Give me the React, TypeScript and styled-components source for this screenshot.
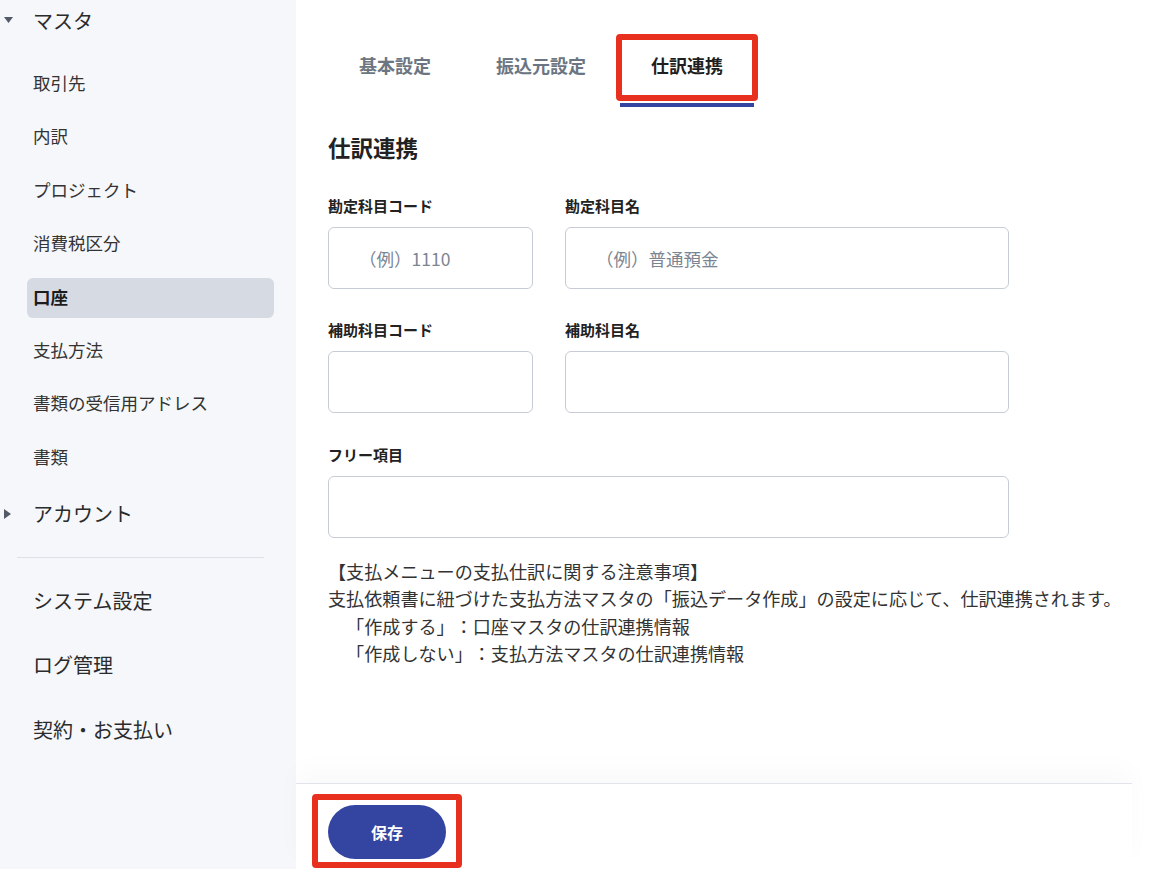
import React from 'react'
import styled, { createGlobalStyle } from 'styled-components'

const GlobalStyle = createGlobalStyle`
  html, body {
    margin: 0;
    padding: 0;
    background: #ffffff;
    font-family: "Noto Sans CJK JP", "Noto Sans", sans-serif;
    color: #333333;
    text-spacing-trim: space-all;
  }
  * {
    box-sizing: border-box;
  }
`

const Layout = styled.div({
  display: 'flex',
  height: '869px',
})

const Sidebar = styled.nav({
  width: '296px',
  flexShrink: 0,
  background: '#f5f7fa',
  display: 'flex',
  flexDirection: 'column',
})

const GroupHeader = styled.div<{ $top: number }>`
  display: flex;
  align-items: center;
  height: 40px;
  margin-top: ${(p) => p.$top}px;
  font-size: 20px;
  color: #2b2b2b;
`

const Caret = styled.span({
  width: '33px',
  paddingLeft: '4px',
  display: 'flex',
  alignItems: 'center',
})

const SubList = styled.ul({
  listStyle: 'none',
  margin: '24px 0 0',
  padding: 0,
  display: 'flex',
  flexDirection: 'column',
  gap: '13.4px',
})

const SubItem = styled.li<{ $active?: boolean }>`
  height: 40px;
  width: 247px;
  margin-left: 27px;
  padding: 0 0 3px 6px;
  display: flex;
  align-items: center;
  border-radius: 6px;
  font-size: 17.5px;
  font-weight: ${(p) => (p.$active ? 700 : 400)};
  color: ${(p) => (p.$active ? '#1c1c1c' : '#333333')};
  background: ${(p) => (p.$active ? '#d5dae3' : 'transparent')};
`

const Divider = styled.hr({
  margin: '23px 0 0 17px',
  width: '247px',
  border: 'none',
  borderTop: '1px solid #dde0e6',
})

const TopItem = styled.div<{ $top: number }>`
  height: 40px;
  margin-top: ${(p) => p.$top}px;
  padding-left: 33px;
  display: flex;
  align-items: center;
  font-size: 20px;
  color: #2b2b2b;
`

const Main = styled.main({
  width: '836px',
  display: 'flex',
  flexDirection: 'column',
})

const Content = styled.div({
  flex: 1,
  padding: '30px 0 0 32px',
})

const Tabs = styled.div({
  display: 'flex',
  gap: '3px',
})

const Tab = styled.div<{ $active?: boolean }>`
  position: relative;
  height: 77px;
  padding: 0 31px 4px;
  display: flex;
  align-items: center;
  font-size: 18px;
  font-weight: 700;
  color: ${(p) => (p.$active ? '#1f1f1f' : '#6c7682')};
  border-bottom: 4px solid ${(p) => (p.$active ? '#3345a1' : 'transparent')};
`

const Highlight = styled.span<{ $top: number; $side: number; $height: number }>`
  position: absolute;
  left: -${(p) => p.$side}px;
  right: -${(p) => p.$side}px;
  top: ${(p) => p.$top}px;
  height: ${(p) => p.$height}px;
  border: 6px solid #e8301e;
  border-radius: 4px;
  pointer-events: none;
`

const Heading = styled.h2({
  margin: '24px 0 0',
  fontSize: '22.5px',
  lineHeight: '32px',
  fontWeight: 700,
  color: '#222222',
})

const FieldRow = styled.div<{ $top: number }>`
  display: flex;
  gap: 32px;
  margin-top: ${(p) => p.$top}px;
`

const Field = styled.label({
  display: 'flex',
  flexDirection: 'column',
  gap: '10px',
})

const FieldLabel = styled.span({
  fontSize: '15px',
  lineHeight: '22px',
  fontWeight: 700,
  color: '#222222',
})

const Input = styled.input<{ $width: number }>`
  width: ${(p) => p.$width}px;
  height: 62px;
  border: 1px solid #c6ccd6;
  border-radius: 6px;
  padding: 0 30px;
  font-family: inherit;
  font-size: 17.5px;
  color: #333333;
  background: #ffffff;
  outline: none;
  &::placeholder {
    color: #7b8592;
  }
`

const Notes = styled.div({
  marginTop: '20px',
  fontSize: '18.1px',
  lineHeight: '27.4px',
  color: '#333333',
  whiteSpace: 'pre',
})

const Footer = styled.footer({
  height: '86px',
  borderTop: '1px solid #e2e4ec',
  boxShadow: '0 -14px 24px rgba(0, 0, 0, 0.025)',
  padding: '21px 0 0 32px',
})

const ButtonWrap = styled.div({
  position: 'relative',
  display: 'inline-block',
})

const SaveButton = styled.button({
  width: '118px',
  height: '54px',
  border: 'none',
  borderRadius: '27px',
  background: '#3345a1',
  color: '#ffffff',
  fontFamily: 'inherit',
  fontSize: '16px',
  fontWeight: 700,
})

function DownCaret(): JSX.Element {
  return (
    <svg width="9" height="6" viewBox="0 0 9 6">
      <path d="M0 0 L9 0 L4.5 6 Z" fill="#525a68" />
    </svg>
  )
}

function RightCaret(): JSX.Element {
  return (
    <svg width="7" height="10" viewBox="0 0 7 10">
      <path d="M0 0 L7 5 L0 10 Z" fill="#525a68" />
    </svg>
  )
}

const masterItems: string[] = [
  '取引先',
  '内訳',
  'プロジェクト',
  '消費税区分',
  '口座',
  '支払方法',
  '書類の受信用アドレス',
  '書類',
]

const notes: string = [
  '【支払メニューの支払仕訳に関する注意事項】',
  '支払依頼書に紐づけた支払方法マスタの「振込データ作成」の設定に応じて、仕訳連携されます。',
  '　「作成する」：口座マスタの仕訳連携情報',
  '　「作成しない」：支払方法マスタの仕訳連携情報',
].join('\n')

export default function App(): JSX.Element {
  return (
    <>
      <GlobalStyle />
      <Layout>
        <Sidebar>
          <GroupHeader $top={0}>
            <Caret>
              <DownCaret />
            </Caret>
            マスタ
          </GroupHeader>
          <SubList>
            {masterItems.map((item: string): JSX.Element => (
              <SubItem key={item} $active={item === '口座'}>
                {item}
              </SubItem>
            ))}
          </SubList>
          <GroupHeader $top={16}>
            <Caret>
              <RightCaret />
            </Caret>
            アカウント
          </GroupHeader>
          <Divider />
          <TopItem $top={23}>システム設定</TopItem>
          <TopItem $top={24}>ログ管理</TopItem>
          <TopItem $top={25}>契約・お支払い</TopItem>
        </Sidebar>

        <Main>
          <Content>
            <Tabs>
              <Tab>基本設定</Tab>
              <Tab>振込元設定</Tab>
              <Tab $active>
                仕訳連携
                <Highlight $top={4} $side={4} $height={67} />
              </Tab>
            </Tabs>

            <Heading>仕訳連携</Heading>

            <FieldRow $top={32}>
              <Field>
                <FieldLabel>勘定科目コード</FieldLabel>
                <Input $width={205} placeholder="（例）1110" />
              </Field>
              <Field>
                <FieldLabel>勘定科目名</FieldLabel>
                <Input $width={444} placeholder="（例）普通預金" />
              </Field>
            </FieldRow>

            <FieldRow $top={30}>
              <Field>
                <FieldLabel>補助科目コード</FieldLabel>
                <Input $width={205} />
              </Field>
              <Field>
                <FieldLabel>補助科目名</FieldLabel>
                <Input $width={444} />
              </Field>
            </FieldRow>

            <FieldRow $top={31}>
              <Field>
                <FieldLabel>フリー項目</FieldLabel>
                <Input $width={681} />
              </Field>
            </FieldRow>

            <Notes>{notes}</Notes>
          </Content>

          <Footer>
            <ButtonWrap>
              <SaveButton>保存</SaveButton>
              <Highlight $top={-11} $side={16} $height={74} />
            </ButtonWrap>
          </Footer>
        </Main>
      </Layout>
    </>
  )
}
